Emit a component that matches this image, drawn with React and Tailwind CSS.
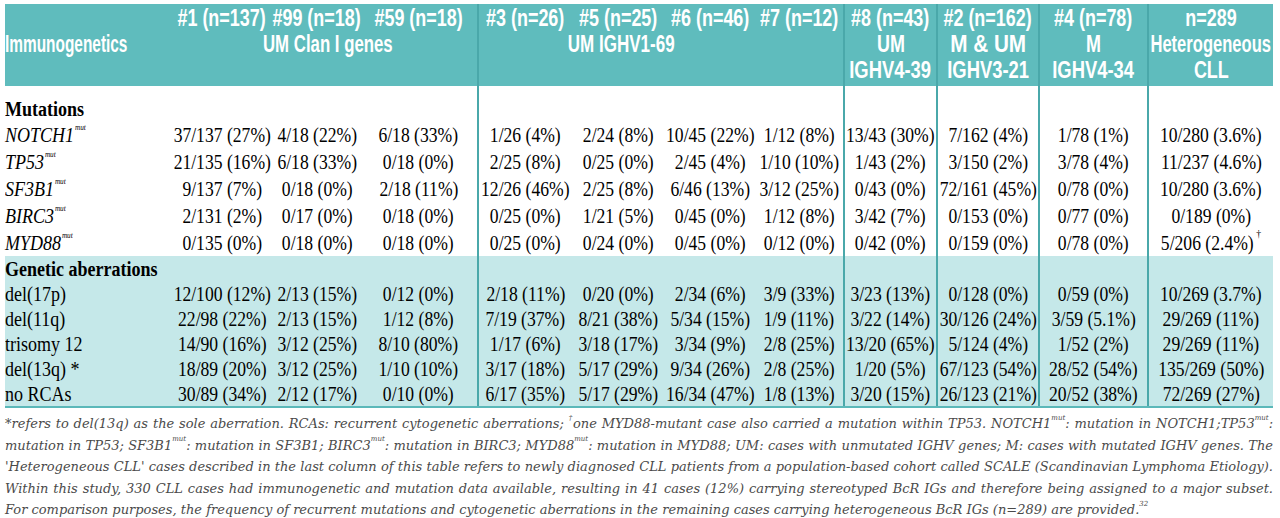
import React from "react";

const BL = "border-l-2 border-[#4aa8aa]";
const colBorder = ["", "", "", "", BL, "", "", "", BL, BL, BL, BL];
const widths = [165, 104, 86, 118, 94, 93, 90, 89, 93, 102, 109, 125];

const mutations = [
  ["NOTCH1", ["37/137 (27%)", "4/18 (22%)", "6/18 (33%)", "1/26 (4%)", "2/24 (8%)", "10/45 (22%)", "1/12 (8%)", "13/43 (30%)", "7/162 (4%)", "1/78 (1%)", "10/280 (3.6%)"]],
  ["TP53", ["21/135 (16%)", "6/18 (33%)", "0/18 (0%)", "2/25 (8%)", "0/25 (0%)", "2/45 (4%)", "1/10 (10%)", "1/43 (2%)", "3/150 (2%)", "3/78 (4%)", "11/237 (4.6%)"]],
  ["SF3B1", ["9/137 (7%)", "0/18 (0%)", "2/18 (11%)", "12/26 (46%)", "2/25 (8%)", "6/46 (13%)", "3/12 (25%)", "0/43 (0%)", "72/161 (45%)", "0/78 (0%)", "10/280 (3.6%)"]],
  ["BIRC3", ["2/131 (2%)", "0/17 (0%)", "0/18 (0%)", "0/25 (0%)", "1/21 (5%)", "0/45 (0%)", "1/12 (8%)", "3/42 (7%)", "0/153 (0%)", "0/77 (0%)", "0/189 (0%)"]],
  ["MYD88", ["0/135 (0%)", "0/18 (0%)", "0/18 (0%)", "0/25 (0%)", "0/24 (0%)", "0/45 (0%)", "0/12 (0%)", "0/42 (0%)", "0/159 (0%)", "0/78 (0%)", "5/206 (2.4%)"]],
];

const aberrations = [
  ["del(17p)", ["12/100 (12%)", "2/13 (15%)", "0/12 (0%)", "2/18 (11%)", "0/20 (0%)", "2/34 (6%)", "3/9 (33%)", "3/23 (13%)", "0/128 (0%)", "0/59 (0%)", "10/269 (3.7%)"]],
  ["del(11q)", ["22/98 (22%)", "2/13 (15%)", "1/12 (8%)", "7/19 (37%)", "8/21 (38%)", "5/34 (15%)", "1/9 (11%)", "3/22 (14%)", "30/126 (24%)", "3/59 (5.1%)", "29/269 (11%)"]],
  ["trisomy 12", ["14/90 (16%)", "3/12 (25%)", "8/10 (80%)", "1/17 (6%)", "3/18 (17%)", "3/34 (9%)", "2/8 (25%)", "13/20 (65%)", "5/124 (4%)", "1/52 (2%)", "29/269 (11%)"]],
  ["del(13q) *", ["18/89 (20%)", "3/12 (25%)", "1/10 (10%)", "3/17 (18%)", "5/17 (29%)", "9/34 (26%)", "2/8 (25%)", "1/20 (5%)", "67/123 (54%)", "28/52 (54%)", "135/269 (50%)"]],
  ["no RCAs", ["30/89 (34%)", "2/12 (17%)", "0/10 (0%)", "6/17 (35%)", "5/17 (29%)", "16/34 (47%)", "1/8 (13%)", "3/20 (15%)", "26/123 (21%)", "20/52 (38%)", "72/269 (27%)"]],
];

const headTop = ["#1 (n=137)", "#99 (n=18)", "#59 (n=18)", "#3 (n=26)", "#5 (n=25)", "#6 (n=46)", "#7 (n=12)", "#8 (n=43)", "#2 (n=162)", "#4 (n=78)", "n=289"];

function H({ children, className = "", s = "scale-x-[0.78]" }) {
  return (
    <div className={"flex justify-center " + className}>
      <span className={"whitespace-nowrap origin-center " + s}>{children}</span>
    </div>
  );
}

function C({ children }) {
  return (
    <div className="flex justify-center">
      <span className="whitespace-nowrap scale-x-[0.88] origin-center">{children}</span>
    </div>
  );
}

function L({ children, className = "" }) {
  return (
    <div className="flex justify-start">
      <span className={"whitespace-nowrap scale-x-[0.9] origin-left " + className}>{children}</span>
    </div>
  );
}

function Mut() {
  return <sup className="text-[8px] italic align-[8px] ml-[1px]">mut</sup>;
}

function FLine({ children, last }) {
  return (
    <div className={last ? "whitespace-nowrap" : "text-justify [text-align-last:justify] whitespace-nowrap"}>
      {children}
    </div>
  );
}

function M() {
  return <sup className="text-[7px] align-[5px]">mut</sup>;
}

export default function App() {
  return (
    <div className="bg-white w-[1280px] h-[518px] overflow-hidden pt-[4px] pl-[5px]">
      <table className="table-fixed border-collapse w-[1268px] text-black">
        <colgroup>
          {widths.map((w, i) => (
            <col key={i} style={{ width: w }} />
          ))}
        </colgroup>
        <thead className="bg-[#5fbcbd] text-white font-['Liberation_Sans',Arial,sans-serif] font-bold text-[23px] leading-[26px]">
          <tr className="h-[27px] align-bottom">
            <th className="p-0"></th>
            {headTop.map((t, i) => (
              <th key={i} className={"p-0 font-bold " + colBorder[i + 1]}>
                <H>{t}</H>
              </th>
            ))}
          </tr>
          <tr className="h-[26px]">
            <th className="p-0 font-bold">
              <div className="flex justify-start">
                <span className="whitespace-nowrap scale-x-[0.67] origin-left">Immunogenetics</span>
              </div>
            </th>
            <th colSpan={3} className="p-0 font-bold">
              <H className="pl-[8px]" s="scale-x-[0.73]">UM Clan I genes</H>
            </th>
            <th colSpan={4} className={"p-0 font-bold " + BL}>
              <H className="pr-[80px]" s="scale-x-[0.74]">UM IGHV1-69</H>
            </th>
            <th className={"p-0 font-bold " + BL}><H>UM</H></th>
            <th className={"p-0 font-bold " + BL}><H s="scale-x-[0.9]">M &amp; UM</H></th>
            <th className={"p-0 font-bold " + BL}><H>M</H></th>
            <th className={"p-0 font-bold " + BL}><H s="scale-x-[0.72]">Heterogeneous</H></th>
          </tr>
          <tr className="h-[29px] align-top">
            <th className="p-0"></th>
            <th colSpan={3} className="p-0"></th>
            <th colSpan={4} className={"p-0 " + BL}></th>
            <th className={"p-0 font-bold " + BL}><H s="scale-x-[0.8]">IGHV4-39</H></th>
            <th className={"p-0 font-bold " + BL}><H s="scale-x-[0.8]">IGHV3-21</H></th>
            <th className={"p-0 font-bold " + BL}><H s="scale-x-[0.8]">IGHV4-34</H></th>
            <th className={"p-0 font-bold " + BL}><H>CLL</H></th>
          </tr>
        </thead>
        <tbody className="font-['Liberation_Serif',serif] text-[20px] leading-[22px]">
          <tr className="h-[35px] align-bottom">
            <td className="p-0 pb-[1px] font-bold">
              <L>Mutations</L>
            </td>
            {widths.slice(1).map((_, i) => (
              <td key={i} className={"p-0 " + colBorder[i + 1]}></td>
            ))}
          </tr>
          {mutations.map(([g, vals], r) => (
            <tr key={g} className="h-[27px]">
              <td className="p-0 italic">
                <L>
                  {g}
                  <Mut />
                </L>
              </td>
              {vals.map((v, i) => (
                <td key={i} className={"p-0 " + colBorder[i + 1]}>
                  <C>
                    {v}
                    {r === 4 && i === 10 ? <sup className="text-[11px] align-[7px] ml-[3px]">†</sup> : null}
                  </C>
                </td>
              ))}
            </tr>
          ))}
          <tr className="h-[25px] bg-[#c5e8e9]">
            <td className="p-0 font-bold">
              <L>Genetic aberrations</L>
            </td>
            {widths.slice(1).map((_, i) => (
              <td key={i} className={"p-0 " + colBorder[i + 1]}></td>
            ))}
          </tr>
          {aberrations.map(([g, vals]) => (
            <tr key={g} className="h-[25px] bg-[#c5e8e9]">
              <td className="p-0">
                <L>{g}</L>
              </td>
              {vals.map((v, i) => (
                <td key={i} className={"p-0 " + colBorder[i + 1]}>
                  <C>{v}</C>
                </td>
              ))}
            </tr>
          ))}
        </tbody>
      </table>
      <div className="w-[1268px] h-[2px] bg-[#5bb8b9]"></div>
      <div className="w-[1268px] pt-[5px] font-['DejaVu_Serif',serif] italic text-[13px] leading-[21.5px] text-[#4a4a4a]">
        <FLine>
          *refers to del(13q) as the sole aberration. RCAs: recurrent cytogenetic aberrations; <sup className="text-[7px] align-[5px]">†</sup>one MYD88-mutant case also carried a mutation within TP53. NOTCH1<M />: mutation in NOTCH1;TP53<M />:
        </FLine>
        <FLine>
          mutation in TP53; SF3B1<M />: mutation in SF3B1; BIRC3<M />: mutation in BIRC3; MYD88<M />: mutation in MYD88; UM: cases with unmutated IGHV genes; M: cases with mutated IGHV genes. The
        </FLine>
        <FLine>
          'Heterogeneous CLL' cases described in the last column of this table refers to newly diagnosed CLL patients from a population-based cohort called SCALE (Scandinavian Lymphoma Etiology).
        </FLine>
        <FLine>
          Within this study, 330 CLL cases had immunogenetic and mutation data available, resulting in 41 cases (12%) carrying stereotyped BcR IGs and therefore being assigned to a major subset.
        </FLine>
        <FLine last>
          For comparison purposes, the frequency of recurrent mutations and cytogenetic aberrations in the remaining cases carrying heterogeneous BcR IGs (n=289) are provided.<sup className="text-[7px] align-[5px]">32</sup>
        </FLine>
      </div>
    </div>
  );
}
